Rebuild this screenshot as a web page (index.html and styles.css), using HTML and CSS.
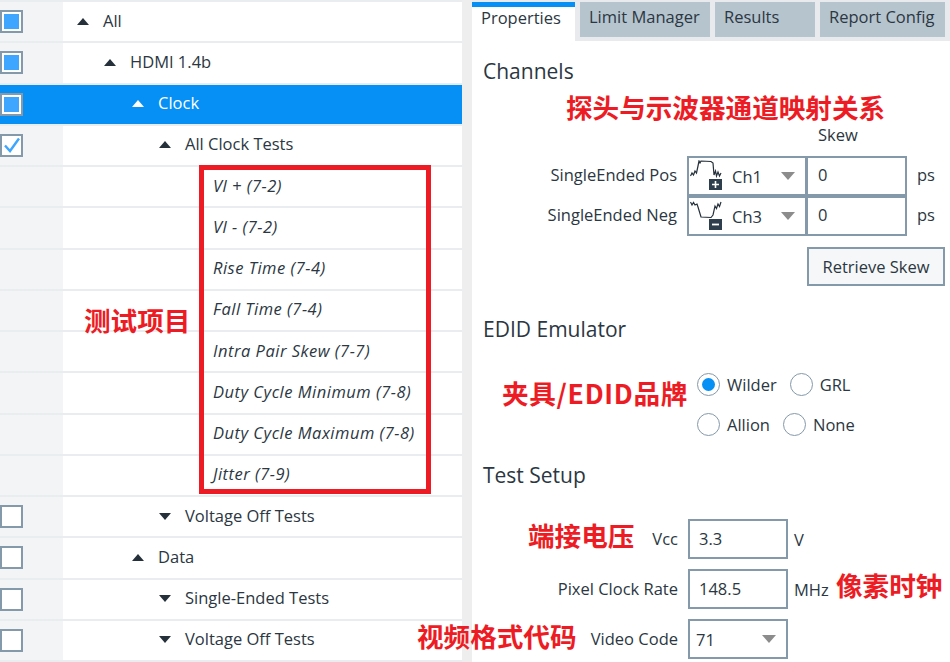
FILE: index.html
```html
<!DOCTYPE html>
<html lang="en">
  <head>
    <meta charset="UTF-8" />
    <title>HDMI Test Setup</title>
    <link rel="stylesheet" href="styles.css">
  </head>

  <body>
    <div class="app">
      <!-- Test tree -->
      <div class="tree">
        <div class="row"><div class="gutter"><span class="check partial"></span></div><div class="node level-0"><span class="arrow up"></span>All</div></div>
        <div class="row"><div class="gutter"><span class="check partial"></span></div><div class="node level-1"><span class="arrow up"></span>HDMI 1.4b</div></div>
        <div class="row selected"><div class="gutter"><span class="check partial"></span></div><div class="node level-2"><span class="arrow up"></span>Clock</div></div>
        <div class="row"><div class="gutter"><span class="check">
          <svg width="18" height="18" viewBox="0 0 18 18"><path d="M2 9.5 L7 15 L16 2.5" fill="none" stroke="#3ea6ff" stroke-width="2.4"/></svg>
        </span></div><div class="node level-3"><span class="arrow up"></span>All Clock Tests</div></div>
        <div class="row"><div class="gutter"></div><div class="node level-4 test">Vl + (7-2)</div></div>
        <div class="row"><div class="gutter"></div><div class="node level-4 test">Vl - (7-2)</div></div>
        <div class="row"><div class="gutter"></div><div class="node level-4 test">Rise Time (7-4)</div></div>
        <div class="row"><div class="gutter"></div><div class="node level-4 test">Fall Time (7-4)</div></div>
        <div class="row"><div class="gutter"></div><div class="node level-4 test">Intra Pair Skew (7-7)</div></div>
        <div class="row"><div class="gutter"></div><div class="node level-4 test">Duty Cycle Minimum (7-8)</div></div>
        <div class="row"><div class="gutter"></div><div class="node level-4 test">Duty Cycle Maximum (7-8)</div></div>
        <div class="row"><div class="gutter"></div><div class="node level-4 test">Jitter (7-9)</div></div>
        <div class="row"><div class="gutter"><span class="check"></span></div><div class="node level-3"><span class="arrow down"></span>Voltage Off Tests</div></div>
        <div class="row"><div class="gutter"><span class="check"></span></div><div class="node level-2"><span class="arrow up"></span>Data</div></div>
        <div class="row"><div class="gutter"><span class="check"></span></div><div class="node level-3"><span class="arrow down"></span>Single-Ended Tests</div></div>
        <div class="row"><div class="gutter"><span class="check"></span></div><div class="node level-3"><span class="arrow down"></span>Voltage Off Tests</div></div>
      </div>

      <!-- Properties panel -->
      <div class="panel">
        <div class="tabs">
          <div class="tab active">Properties</div>
          <div class="tab limit">Limit Manager</div>
          <div class="tab results">Results</div>
          <div class="tab report">Report Config</div>
        </div>

        <div class="content">
          <h2 class="section-title">Channels</h2>
          <div class="skew-label">Skew</div>
          <div class="channel-row">
            <label class="channel-label">SingleEnded Pos</label>
            <div class="channel-select">
              <svg class="wave" width="34" height="32" viewBox="0 0 34 32">
                <path d="M0.5 16 L2 13 L3.5 15 L5 11 L6.5 13 L8 6 L9 1 L10 3 L11 1 L21 1.5 L23 3 L24 15 L25.5 11 L26.5 16 L28 12 L29.5 16 L31 13" fill="none" stroke="#25303b" stroke-width="1.2"/>
                <rect x="19" y="19" width="13" height="11" fill="#2f3e4c"/>
                <path d="M25.5 21 V28 M22 24.5 H29" stroke="#fff" stroke-width="1.6"/>
              </svg>
              <span class="channel-name">Ch1</span>
              <span class="caret"></span>
            </div>
            <div class="text-box skew-box">0</div>
            <span class="unit ps-unit">ps</span>
          </div>
          <div class="channel-row">
            <label class="channel-label">SingleEnded Neg</label>
            <div class="channel-select">
              <svg class="wave" width="34" height="32" viewBox="0 0 34 32">
                <path d="M0.5 2 L2 5 L3.5 2.5 L5 5 L7 4 L8 7 L11 17 L21 17.5 L23 15 L25 6 L26.5 8.5 L28 4 L29.5 6.5 L31 2" fill="none" stroke="#25303b" stroke-width="1.2"/>
                <rect x="19" y="19" width="13" height="11" fill="#2f3e4c"/>
                <path d="M22 24.5 H29" stroke="#fff" stroke-width="1.8"/>
              </svg>
              <span class="channel-name">Ch3</span>
              <span class="caret"></span>
            </div>
            <div class="text-box skew-box">0</div>
            <span class="unit ps-unit">ps</span>
          </div>
          <button class="retrieve" type="button">Retrieve Skew</button>

          <h2 class="section-title edid-title">EDID Emulator</h2>
          <div class="radio-row">
            <span class="radio on"></span><span class="radio-text">Wilder</span>
            <span class="radio"></span><span class="radio-text">GRL</span>
          </div>
          <div class="radio-row">
            <span class="radio"></span><span class="radio-text">Allion</span>
            <span class="radio"></span><span class="radio-text">None</span>
          </div>

          <h2 class="section-title setup-title">Test Setup</h2>
          <div class="setup-row first">
            <label class="setup-label">Vcc</label>
            <div class="text-box setup-box">3.3</div>
            <span class="unit setup-unit">V</span>
          </div>
          <div class="setup-row">
            <label class="setup-label">Pixel Clock Rate</label>
            <div class="text-box setup-box">148.5</div>
            <span class="unit setup-unit">MHz</span>
          </div>
          <div class="setup-row">
            <label class="setup-label">Video Code</label>
            <div class="text-box setup-box code-box">71<span class="caret"></span></div>
          </div>
        </div>
      </div>
    </div>

    <!-- Red markup drawn over the screenshot -->
    <div class="mark-box"></div>
    <div class="note note-probe">探头与示波器通道映射关系</div>
    <div class="note note-items">测试项目</div>
    <div class="note note-edid">夹具/EDID品牌</div>
    <div class="note note-vcc">端接电压</div>
    <div class="note note-clock">像素时钟</div>
    <div class="note note-video">视频格式代码</div>
  </body>
</html>
```

FILE: styles.css
```css
/* Global Styles */
html,
body {
  margin: 0;
  padding: 0;
  height: 662px;
  overflow: hidden;
}

body {
  position: relative;
  background: #eeeeee;
  font-family: "Open Sans", "Noto Sans", sans-serif;
  font-size: 16.5px;
  color: #2b3742;
}

.app {
  display: flex;
  height: 662px;
}

/* Tree */
.tree {
  width: 462px;
  padding-top: 2px;
  background: #e9edf0;
}

.row {
  display: flex;
  height: 41.25px;
  box-sizing: border-box;
  border-bottom: 2px solid #e9edf0;
  background: #fff;
}

.gutter {
  width: 63px;
  flex: none;
  background: #f2f4f6;
  display: flex;
  align-items: center;
}

.node {
  flex: 1;
  display: flex;
  align-items: center;
  padding-bottom: 3px;
}

.level-0 { padding-left: 14px; }
.level-1 { padding-left: 41px; }
.level-2 { padding-left: 69px; }
.level-3 { padding-left: 96px; }
.level-4 { padding-left: 150px; }

.test {
  font-style: italic;
  letter-spacing: 0.5px;
}

.row.selected,
.row.selected .gutter {
  background: #068ff4;
  color: #fff;
}

.arrow {
  width: 0;
  height: 0;
  margin-top: 2px;
  margin-right: 14px;
  border-left: 6px solid transparent;
  border-right: 6px solid transparent;
}

.arrow.up {
  border-bottom: 7px solid #25303b;
}

.arrow.down {
  border-top: 7px solid #25303b;
}

.selected .arrow.up {
  border-bottom-color: #fff;
}

.check {
  width: 23px;
  height: 23px;
  box-sizing: border-box;
  border: 2px solid #8499aa;
  background: #fff;
  display: flex;
  align-items: center;
  justify-content: center;
}

.check.partial::after {
  content: "";
  width: 15px;
  height: 15px;
  background: #3ea6ff;
}

/* Right panel */
.panel {
  width: 478px;
  margin-left: 10px;
  background: #fff;
}

.tabs {
  display: flex;
  gap: 5px;
  height: 39px;
  padding-top: 2px;
  background: #e8eaed;
}

.tab {
  height: 35px;
  box-sizing: border-box;
  padding: 3px 0 0 9px;
  background: #b6c4ce;
  line-height: 24px;
}

.tab.active {
  width: 103px;
  height: 39px;
  border-top: 5px solid #068ff4;
  padding-top: 0;
  background: #fff;
  line-height: 22px;
}

.tab.limit { width: 130px; }
.tab.results { width: 100px; }
.tab.report { width: 125px; }

.content {
  padding: 0 0 0 10px;
}

.section-title {
  margin: 0;
  font-size: 21px;
  font-weight: 400;
  line-height: 30px;
  padding: 15px 0 0 1px;
}

.skew-label {
  margin-top: 41px;
  margin-left: 336px;
  line-height: 16px;
}

.channel-row {
  display: flex;
  align-items: center;
  height: 40px;
}

.skew-label + .channel-row {
  margin-top: 13px;
}

.channel-label {
  width: 195px;
  padding-bottom: 4px;
  text-align: right;
  flex: none;
}

.channel-select {
  width: 120px;
  height: 40px;
  margin-left: 10px;
  box-sizing: border-box;
  border: 2px solid #8499aa;
  display: flex;
  align-items: center;
  flex: none;
}

.wave {
  flex: none;
  margin-left: 1px;
}

.channel-name {
  margin-left: 8px;
}

.caret {
  width: 0;
  height: 0;
  margin-left: auto;
  border-left: 7px solid transparent;
  border-right: 7px solid transparent;
  border-top: 8px solid #8c8c8c;
}

.channel-select .caret {
  margin-right: 10px;
}

.text-box {
  box-sizing: border-box;
  border: 2px solid #8499aa;
  display: flex;
  align-items: center;
  background: #fff;
  flex: none;
}

.skew-box {
  width: 100px;
  height: 40px;
  padding: 0 0 3px 10px;
  border-left-width: 1px;
}

.unit {
  margin-left: 10px;
}

.ps-unit {
  padding-bottom: 3px;
}

.setup-unit {
  margin-left: 6px;
}

.retrieve {
  display: block;
  width: 138px;
  height: 39px;
  margin: 11px 0 0 325px;
  border: 2px solid #8499aa;
  background: #f6f7f8;
  color: #2b3742;
  font: inherit;
  padding: 0;
}

.edid-title {
  margin-top: 13px;
}

.radio-row {
  display: flex;
  align-items: center;
  height: 40px;
  margin-left: 215px;
}

.edid-title + .radio-row {
  margin-top: 20px;
}

.radio {
  width: 23px;
  height: 23px;
  box-sizing: border-box;
  border: 1.5px solid #8499aa;
  border-radius: 50%;
  background: #fff;
  display: flex;
  align-items: center;
  justify-content: center;
  flex: none;
}

.radio.on::after {
  content: "";
  width: 13px;
  height: 13px;
  border-radius: 50%;
  background: #068ff4;
}

.radio-text {
  margin: 0 13px 0 7px;
}

.setup-title {
  margin-top: 1px;
}

.setup-row {
  display: flex;
  align-items: center;
  height: 40px;
  margin-bottom: 10px;
}

.setup-row.first {
  margin-top: 29px;
}

.setup-label {
  width: 196px;
  padding-bottom: 2px;
  text-align: right;
  flex: none;
}

.setup-box {
  width: 100px;
  height: 40px;
  margin-left: 10px;
  padding: 0 0 2px 9px;
}

.code-box {
  padding: 0 10px 0 6px;
}

/* Red markup */
.mark-box {
  position: absolute;
  left: 199px;
  top: 165px;
  width: 232px;
  height: 329px;
  box-sizing: border-box;
  border: 5px solid #ed1c24;
}

.note {
  position: absolute;
  font-family: "Noto Sans CJK SC", sans-serif;
  font-size: 26.6px;
  font-weight: 700;
  line-height: 28px;
  color: #ed1c24;
  white-space: nowrap;
}

.note-probe { left: 566px; top: 93px; }
.note-items { left: 84px; top: 306px; }
.note-edid { left: 502px; top: 379px; letter-spacing: 0.7px; }
.note-vcc { left: 528px; top: 521px; }
.note-clock { left: 836px; top: 571px; }
.note-video { left: 417px; top: 622px; }
```
